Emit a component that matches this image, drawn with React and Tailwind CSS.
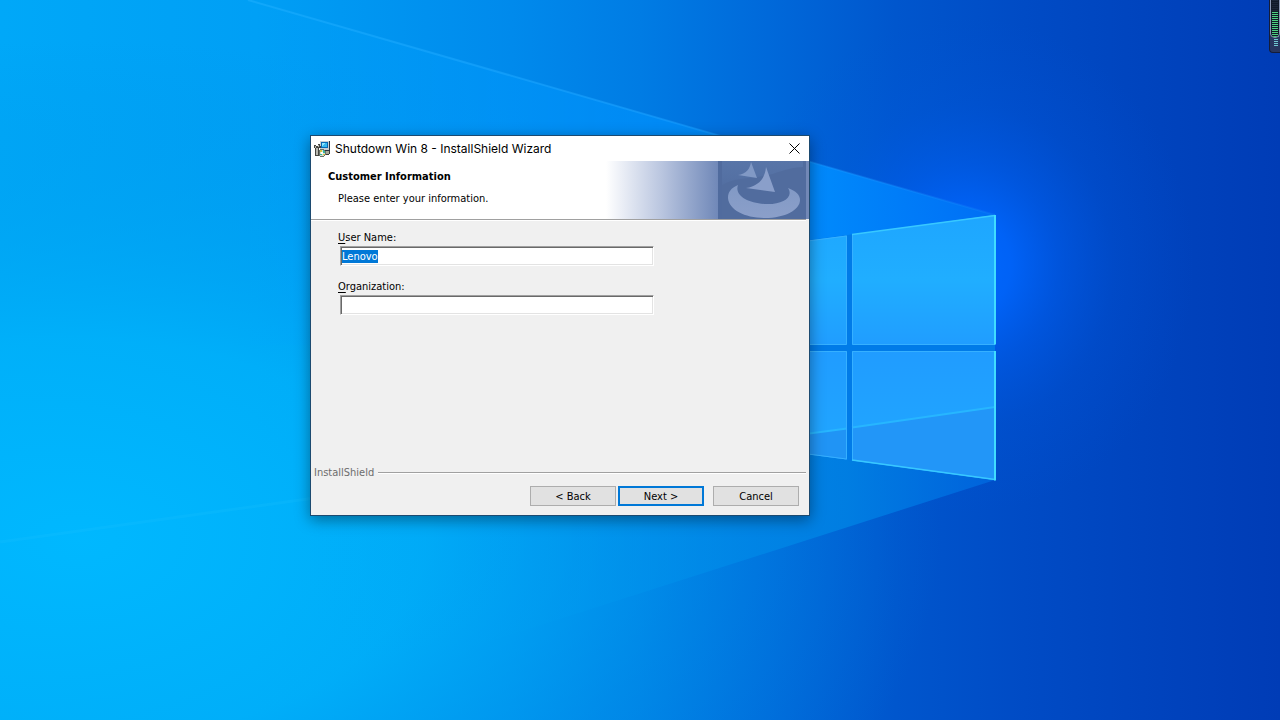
import { useEffect, useRef, useState } from "react";

const Wallpaper = () => (
  <svg
    className="absolute inset-0 h-full w-full"
    viewBox="0 0 1280 720"
    preserveAspectRatio="xMidYMid slice"
    aria-hidden="true"
  >
    <defs>
      <linearGradient id="sky" x1="0" y1="0" x2="1280" y2="0" gradientUnits="userSpaceOnUse">
        <stop offset="0" stopColor="#00a8f8" />
        <stop offset="0.2" stopColor="#009ff5" />
        <stop offset="0.4" stopColor="#008aec" />
        <stop offset="0.5" stopColor="#007ce4" />
        <stop offset="0.6" stopColor="#0069da" />
        <stop offset="0.7" stopColor="#0056cd" />
        <stop offset="0.8" stopColor="#004bc5" />
        <stop offset="1" stopColor="#003cb6" />
      </linearGradient>
      <radialGradient id="cyan" cx="0" cy="0" r="1" gradientUnits="userSpaceOnUse" gradientTransform="translate(80 540) scale(860 500)">
        <stop offset="0" stopColor="#00b9ff" stopOpacity="0.95" />
        <stop offset="0.4" stopColor="#00b2fa" stopOpacity="0.8" />
        <stop offset="0.7" stopColor="#00a0ee" stopOpacity="0.35" />
        <stop offset="1" stopColor="#0090e4" stopOpacity="0" />
      </radialGradient>
      <radialGradient id="glow" cx="0" cy="0" r="1" gradientUnits="userSpaceOnUse" gradientTransform="translate(965 265) scale(230 250)">
        <stop offset="0" stopColor="#0068ff" />
        <stop offset="0.2" stopColor="#0066ff" stopOpacity="0.85" />
        <stop offset="0.4" stopColor="#0060f6" stopOpacity="0.5" />
        <stop offset="0.65" stopColor="#0059e6" stopOpacity="0.2" />
        <stop offset="1" stopColor="#0054dc" stopOpacity="0" />
      </radialGradient>
      <linearGradient id="beamTop" x1="250" y1="0" x2="995" y2="0" gradientUnits="userSpaceOnUse">
        <stop offset="0" stopColor="#00a8ff" stopOpacity="0.1" />
        <stop offset="0.5" stopColor="#0094ff" stopOpacity="0.6" />
        <stop offset="0.78" stopColor="#008cff" stopOpacity="0.9" />
        <stop offset="1" stopColor="#0070f4" stopOpacity="0.9" />
      </linearGradient>
      <linearGradient id="beamLow" x1="250" y1="0" x2="995" y2="0" gradientUnits="userSpaceOnUse">
        <stop offset="0" stopColor="#00b4fa" stopOpacity="0" />
        <stop offset="0.4" stopColor="#009cf0" stopOpacity="0.35" />
        <stop offset="0.8" stopColor="#0082e4" stopOpacity="0.85" />
        <stop offset="1" stopColor="#0068e0" stopOpacity="0.8" />
      </linearGradient>
      <linearGradient id="ray" x1="250" y1="0" x2="995" y2="0" gradientUnits="userSpaceOnUse">
        <stop offset="0" stopColor="#20b0ff" stopOpacity="0.5" />
        <stop offset="0.5" stopColor="#20a4ff" stopOpacity="0.5" />
        <stop offset="1" stopColor="#2090ff" stopOpacity="0.2" />
      </linearGradient>
      <linearGradient id="pane" x1="0" y1="215" x2="0" y2="345" gradientUnits="userSpaceOnUse">
        <stop offset="0" stopColor="#1ea6ff" />
        <stop offset="0.5" stopColor="#20aeff" />
        <stop offset="1" stopColor="#209dff" />
      </linearGradient>
      <linearGradient id="paneLow" x1="0" y1="350" x2="0" y2="430" gradientUnits="userSpaceOnUse">
        <stop offset="0" stopColor="#209cff" />
        <stop offset="1" stopColor="#20a4ff" />
      </linearGradient>
    </defs>
    <rect width="1280" height="720" fill="url(#sky)" />
    <rect width="1280" height="720" fill="url(#cyan)" />
    <rect width="1280" height="720" fill="url(#glow)" />

    {/* light cone */}
    <path d="M250 0 250 345 995 345 995 215Z" fill="url(#beamTop)" />
    <path d="M250 345V718L995 480V345Z" fill="url(#beamLow)" />
    <path d="M248 0 995 215" stroke="url(#ray)" strokeWidth="2" fill="none" />
    <path d="M0 542 400 486" stroke="#20c4ff" strokeOpacity="0.2" strokeWidth="3" />

    {/* window frame between the panes */}
    <path d="M700 255 995 215V480L700 440Z" fill="#007be8" />
    <path d="M700 255 847 235.500V344.500H700Z" fill="url(#pane)" />
    <path d="M852 234.500 995 215V344.500H852Z" fill="url(#pane)" />
    <path d="M700 351H847V459.500L700 440Z" fill="url(#paneLow)" />
    <path d="M852 351H995V480L852 460.500Z" fill="url(#paneLow)" />
    <path d="M700 448 847 428.500V459.500L700 440Z" fill="#2094f5" />
    <path d="M852 427.500 995 407V480L852 460.500Z" fill="#2296f8" />
    <path d="M700 448 847 428.500M852 427.500 995 407" stroke="#27b6ff" strokeWidth="2" />
    <g fill="none" stroke="#36b0ff" strokeWidth="1">
      <path d="M700 255 846.500 236V344.500H700M852.500 235V344.500H995" />
      <path d="M700 351.500H846.500V459L700 440M995 351.500H852.500V460" />
    </g>
    <path d="M852 234.500 995 215.500M852 460 995 479.500" stroke="#38c8ff" strokeWidth="1.500" />
    <path d="M995 215V344.500M995 351V480.500" stroke="#40dcff" strokeWidth="2" />
  </svg>
);

const InstallerIcon = () => (
  <svg className="h-4 w-4" viewBox="0 0 16 16" shapeRendering="crispEdges" aria-hidden="true">
    <path d="M6 0h9v9H6z" fill="#c9cdd2" />
    <path d="M15 0h1v10h-1zM6 9h10v1H6z" fill="#2c3440" />
    <path d="M7 1h7v6H7z" fill="#0868b4" />
    <path d="M8 2h5v4H8z" fill="#36b8f0" />
    <path d="M8 2h3v1h-1v1H9v1H8z" fill="#8fe4ff" />
    <path d="M10 10h5v3h-5z" fill="#a8a898" />
    <path d="M15 10h1v3h-1zM11 13h4v1h-4z" fill="#3c3c38" />
    <path d="M0 4h2v1h2V3h2v2h1v2H5v8H1V7H0z" fill="#45443f" />
    <path d="M1 5h1v2H1zM2 7h2v7H2zM4 4h1v2H4z" fill="#b8b8b0" />
    <path d="M6 8h4v1h1v1h1v4h-1v1h-1v1H6v-1H5V9h1z" fill="#687068" />
    <path d="M6 9h4v1h1v4h-1v1H6z" fill="#d5e0d0" />
    <path d="M6 9h2v2H6zM9 13h2v1H9z" fill="#d5c43c" />
    <path d="M9 9h1v1h1v2H9zM6 13h2v1H6z" fill="#38b8a0" />
    <path d="M7 11h2v2H7z" fill="#fff" />
  </svg>
);

const BannerLogo = () => (
  <svg className="h-full w-[91px]" viewBox="0 0 91 58" aria-hidden="true">
    <defs>
      <linearGradient id="tile" x1="0" y1="0" x2="0" y2="1">
        <stop offset="0" stopColor="#5875a8" />
        <stop offset="1" stopColor="#536fa2" />
      </linearGradient>
      <linearGradient id="mark" x1="0" y1="0" x2="0" y2="1">
        <stop offset="0" stopColor="#8199c5" />
        <stop offset="1" stopColor="#8b9fc9" />
      </linearGradient>
    </defs>
    <rect width="91" height="58" fill="#516c9e" />
    <path d="M4 0H85V6C66 7 59 13 45 15C28 18 16 17 4 24Z" fill="url(#tile)" />
    <path d="M0 0H4V58H0Z" fill="#506b9e" />
    <path d="M88 0h3v58h-3z" fill="#7288b6" />
    <path
      d="M20 24C13 27 10 31 10 37C11 49 27 57 47 57C67 57 82 49 82 39C82 34 78 30 70 27C76 36 65 43 50 43C31 43 16 35 20 24Z"
      fill="url(#mark)"
    />
    <path d="M33 1 39 17 20 14C28 13 32 8 33 1Z" fill="#8199c5" />
    <path d="M48 6 57 31 28 27C40 25 47 18 48 6Z" fill="#8a9fca" />
  </svg>
);

const Field = ({ id, accessKey, label, value, onChange, inputRef }) => (
  <div className="flex flex-col">
    <label htmlFor={id} className="-ml-0.5 h-4 leading-4">
      <span className="underline underline-offset-2">{accessKey}</span>
      {label}
    </label>
    <input
      id={id}
      ref={inputRef}
      type="text"
      value={value}
      onChange={onChange}
      className="h-5 w-full border border-t-[#a0a0a0] border-l-[#a0a0a0] border-r-white border-b-white bg-white px-px shadow-[inset_1px_1px_0_#696969,inset_-1px_-1px_0_#e3e3e3] outline-none selection:bg-[#0078d7] selection:text-white"
    />
  </div>
);

const WizardButton = ({ children, primary }) => (
  <button
    type="button"
    className={`h-5 w-[86px] bg-[#e1e1e1] leading-none ${
      primary ? "border-2 border-[#0078d7]" : "border border-[#adadad]"
    }`}
  >
    {children}
  </button>
);

// Level meter docked at the screen edge
const levels = Array.from({ length: 20 }, (_, i) => i);

const EdgeMeter = () => (
  <div className="absolute top-0 right-0 h-[53px] w-[11px] overflow-hidden rounded-bl border-b border-l border-[#141c38] bg-[#28365e]">
    <div className="flex h-[38px] flex-col gap-px overflow-hidden rounded-b-md border-r border-b border-l border-[#8c98b4] bg-[#101828] pl-px">
      {levels.map((i) => (
        <span
          key={i}
          className={`h-px w-[6px] shrink-0 ${i < 6 ? "bg-[#1c2638]" : "bg-[#4cd080]"}`}
        />
      ))}
    </div>
    <div className="flex flex-col items-end gap-px pt-px pr-0.5">
      <span className="h-px w-1 bg-[#70c8d0]" />
      <span className="h-px w-1 bg-[#70c8d0]" />
      <span className="h-px w-1 bg-[#70c8d0]" />
      <span className="h-px w-1 bg-[#70c8d0]" />
    </div>
  </div>
);

const App = () => {
  const [userName, setUserName] = useState("Lenovo");
  const [organization, setOrganization] = useState("");
  const userNameRef = useRef(null);

  useEffect(() => {
    userNameRef.current.focus();
    userNameRef.current.select();
  }, []);

  return (
    <main className="relative min-h-screen overflow-hidden bg-[#0078d7]">
      <Wallpaper />
      <EdgeMeter />

      <section
        role="dialog"
        aria-labelledby="wizard-title"
        className="absolute top-[135px] left-[310px] flex w-[500px] flex-col border border-[#1c4a70] bg-[#f0f0f0] font-['DejaVu_Sans_Condensed','DejaVu_Sans',sans-serif] text-[11px] text-black shadow-[0_4px_14px_rgba(0,0,0,0.4)]"
      >
        {/* Title bar */}
        <header className="flex h-[25px] items-center bg-white pl-[3px]">
          <InstallerIcon />
          <h1
            id="wizard-title"
            className="flex-1 pl-[5px] font-['Inter',sans-serif] text-[12px] leading-4"
          >
            Shutdown Win 8 - InstallShield Wizard
          </h1>
          <button type="button" aria-label="Close" className="flex h-full w-[29px] items-center justify-center">
            <svg className="h-[11px] w-[11px]" viewBox="0 0 11 11" aria-hidden="true">
              <path d="M0.500 0.500 10.500 10.500M10.500 0.500 0.500 10.500" stroke="#000" strokeWidth="1" />
            </svg>
          </button>
        </header>

        {/* Banner */}
        <div className="flex h-[58px] bg-white">
          <div className="flex-1 pt-[9px] pl-[17px]">
            <h2 className="leading-[14px] font-bold">Customer Information</h2>
            <p className="mt-2 pl-2.5 leading-[14px]">Please enter your information.</p>
          </div>
          <div className="w-[112px] bg-linear-to-r from-white via-[#b9c5df] to-[#7088b8]" />
          <BannerLogo />
        </div>
        <div className="mr-[3px] h-0.5 border-t border-b border-t-[#a0a0a0] border-b-white" />

        <form className="flex h-[246px] flex-col gap-[13px] pt-[9px] pr-[155px] pl-[29px]">
          <Field
            id="user-name"
            accessKey="U"
            label="ser Name:"
            value={userName}
            onChange={(e) => setUserName(e.target.value)}
            inputRef={userNameRef}
          />
          <Field
            id="organization"
            accessKey="O"
            label="rganization:"
            value={organization}
            onChange={(e) => setOrganization(e.target.value)}
          />
        </form>

        {/* Footer */}
        <div className="flex h-3 items-center gap-1 pr-[3px] pl-[3px]">
          <span className="leading-3 text-[#6d6d6d]">InstallShield</span>
          <span className="h-0.5 flex-1 border-t border-b border-t-[#a0a0a0] border-b-white" />
        </div>
        <footer className="flex justify-end gap-0.5 pt-[7px] pr-2.5 pb-[9px]">
          <WizardButton>&lt; Back</WizardButton>
          <WizardButton primary>Next &gt;</WizardButton>
          <div className="pl-[7px]">
            <WizardButton>Cancel</WizardButton>
          </div>
        </footer>
      </section>
    </main>
  );
};

export default App;
